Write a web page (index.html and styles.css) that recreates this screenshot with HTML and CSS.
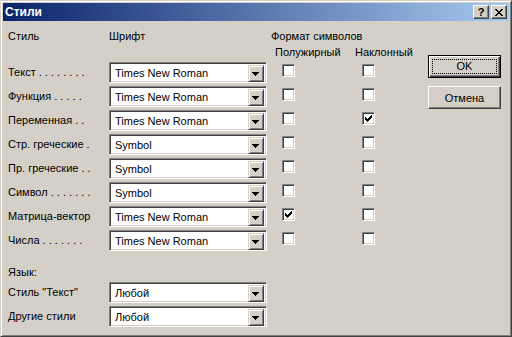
FILE: index.html
```html
<!DOCTYPE html>
<html lang="ru">
  <head>
    <meta charset="UTF-8" />
    <meta name="viewport" content="width=device-width, initial-scale=1.0" />
    <title>Стили</title>
    <link rel="stylesheet" href="styles.css">
  </head>
  <body>
    <div class="window">
      <div class="titlebar">
        <span class="title">Стили</span>
        <div class="caption-buttons">
          <button class="cap-btn help">?</button>
          <button class="cap-btn">
            <svg width="8" height="7" viewBox="0 0 8 7"><path d="M0 0h2v1h-2zM6 0h2v1h-2zM1 1h2v1h-2zM5 1h2v1h-2zM2 2h4v1h-4zM3 3h2v1h-2zM2 4h4v1h-4zM1 5h2v1h-2zM5 5h2v1h-2zM0 6h2v1h-2zM6 6h2v1h-2z" fill="#000"/></svg>
          </button>
        </div>
      </div>

      <div class="content">
        <div class="form">
          <div class="head">
            <div>Стиль</div>
            <div>Шрифт</div>
            <div class="fmt">Формат символов</div>
            <div class="sub sub1">Полужирный</div>
            <div class="sub sub2">Наклонный</div>
          </div>

          <div class="grid">
            <div class="label">Текст . . . . . . . .</div>
            <div class="combo"><span>Times New Roman</span><i class="drop"></i></div>
            <div class="cell"><span class="check"></span></div>
            <div class="cell"><span class="check"></span></div>

            <div class="label">Функция . . . . .</div>
            <div class="combo"><span>Times New Roman</span><i class="drop"></i></div>
            <div class="cell"><span class="check"></span></div>
            <div class="cell"><span class="check"></span></div>

            <div class="label">Переменная . .</div>
            <div class="combo"><span>Times New Roman</span><i class="drop"></i></div>
            <div class="cell"><span class="check"></span></div>
            <div class="cell"><span class="check checked"></span></div>

            <div class="label">Стр. греческие .</div>
            <div class="combo"><span>Symbol</span><i class="drop"></i></div>
            <div class="cell"><span class="check"></span></div>
            <div class="cell"><span class="check"></span></div>

            <div class="label">Пр. греческие . .</div>
            <div class="combo"><span>Symbol</span><i class="drop"></i></div>
            <div class="cell"><span class="check"></span></div>
            <div class="cell"><span class="check"></span></div>

            <div class="label">Символ . . . . . . .</div>
            <div class="combo"><span>Symbol</span><i class="drop"></i></div>
            <div class="cell"><span class="check"></span></div>
            <div class="cell"><span class="check"></span></div>

            <div class="label">Матрица-вектор</div>
            <div class="combo"><span>Times New Roman</span><i class="drop"></i></div>
            <div class="cell"><span class="check checked"></span></div>
            <div class="cell"><span class="check"></span></div>

            <div class="label">Числа . . . . . . .</div>
            <div class="combo"><span>Times New Roman</span><i class="drop"></i></div>
            <div class="cell"><span class="check"></span></div>
            <div class="cell"><span class="check"></span></div>
          </div>

          <div class="lang-title">Язык:</div>
          <div class="lang">
            <div class="label">Стиль "Текст"</div>
            <div class="combo"><span>Любой</span><i class="drop"></i></div>
            <div class="label">Другие стили</div>
            <div class="combo"><span>Любой</span><i class="drop"></i></div>
          </div>
        </div>

        <div class="actions">
          <button class="btn default"><span class="focus">OK</span></button>
          <button class="btn">Отмена</button>
        </div>
      </div>
    </div>
  </body>
</html>
```

FILE: styles.css
```css
body {
  margin: 0;
  background: #d4d0c8;
  font-family: "Liberation Sans", Arial, sans-serif;
  font-size: 11px;
  color: #000;
}
.window {
  width: 512px;
  height: 337px;
  box-sizing: border-box;
  border: 1px solid;
  border-color: #d4d0c8 #404040 #404040 #d4d0c8;
  box-shadow: inset 1px 1px #fff, inset -1px -1px #808080;
  padding: 2px;
  background: #d4d0c8;
}
.titlebar {
  height: 18px;
  display: flex;
  align-items: flex-start;
  background: linear-gradient(to right, #0a246a, #a6caf0);
  color: #fff;
  font-weight: bold;
}
.title {
  padding-left: 2px;
  line-height: 18px;
  font-size: 12px;
}
.caption-buttons {
  margin-left: auto;
  display: flex;
  gap: 2px;
  padding: 2px 2px 0 0;
}
.cap-btn {
  width: 16px;
  height: 14px;
  padding: 0;
  box-sizing: border-box;
  background: #d4d0c8;
  border: 1px solid;
  border-color: #fff #404040 #404040 #fff;
  box-shadow: inset -1px -1px #808080;
  display: flex;
  align-items: center;
  justify-content: center;
  font-family: "Liberation Sans", Arial, sans-serif;
  font-size: 11px;
  font-weight: bold;
  line-height: 12px;
  color: #000;
}
.content {
  display: flex;
}
.form {
  width: 424px;
  box-sizing: border-box;
  padding: 7px 0 0 5px;
}
.head {
  display: grid;
  grid-template-columns: 101px 158px 80px 80px;
  grid-auto-rows: 16px;
  line-height: 16px;
}
.fmt {
  grid-column: 3 / span 2;
  padding-left: 4px;
}
.sub {
  padding-left: 8px;
}
.sub1 {
  grid-column: 3;
}
.sub2 {
  grid-column: 4;
}
.grid {
  margin-top: 2px;
  display: grid;
  grid-template-columns: 101px 158px 80px 80px;
  grid-auto-rows: 21px;
  row-gap: 3px;
}
.label {
  line-height: 21px;
  white-space: nowrap;
}
.combo {
  display: flex;
  box-sizing: border-box;
  height: 21px;
  border: 1px solid;
  border-color: #808080 #fff #fff #808080;
  box-shadow: inset 1px 1px #404040, inset -1px -1px #d4d0c8;
  padding: 2px;
  background: #fff;
}
.combo span {
  flex: 1;
  padding-left: 3px;
  line-height: 17px;
}
.drop {
  width: 16px;
  height: 17px;
  box-sizing: border-box;
  border: 1px solid;
  border-color: #d4d0c8 #404040 #404040 #d4d0c8;
  box-shadow: inset 1px 1px #fff, inset -1px -1px #808080;
  background-color: #d4d0c8;
  background-image: url("data:image/svg+xml,%3Csvg xmlns='http://www.w3.org/2000/svg' width='7' height='4'%3E%3Cpath d='M0 0h7v1h-7zM1 1h5v1h-5zM2 2h3v1h-3zM3 3h1v1h-1z'/%3E%3C/svg%3E");
  background-repeat: no-repeat;
  background-position: 3px 6px;
}
.cell {
  padding: 2px 0 0 15px;
}
.check {
  display: block;
  width: 13px;
  height: 13px;
  box-sizing: border-box;
  border: 1px solid;
  border-color: #808080 #fff #fff #808080;
  box-shadow: inset 1px 1px #404040, inset -1px -1px #d4d0c8;
  background: #fff;
}
.check.checked {
  background-image: url("data:image/svg+xml,%3Csvg xmlns='http://www.w3.org/2000/svg' width='7' height='7'%3E%3Cpath d='M0 2h1v3h-1zM1 3h1v3h-1zM2 4h1v3h-1zM3 3h1v3h-1zM4 2h1v3h-1zM5 1h1v3h-1zM6 0h1v3h-1z'/%3E%3C/svg%3E");
  background-repeat: no-repeat;
  background-position: 2px 2px;
}
.lang-title {
  margin-top: 13px;
  line-height: 16px;
}
.lang {
  margin-top: 2px;
  display: grid;
  grid-template-columns: 101px 158px;
  grid-auto-rows: 21px;
  row-gap: 3px;
}
.actions {
  margin-left: 1px;
  padding-top: 34px;
  display: flex;
  flex-direction: column;
  gap: 8px;
}
.btn {
  width: 73px;
  height: 23px;
  padding: 0;
  box-sizing: border-box;
  background: #d4d0c8;
  border: 1px solid;
  border-color: #fff #404040 #404040 #fff;
  box-shadow: inset -1px -1px #808080;
  font-family: "Liberation Sans", Arial, sans-serif;
  font-size: 11px;
  color: #000;
}
.btn.default {
  border: 1px solid #000;
  box-shadow: inset 1px 1px #fff, inset -1px -1px #404040, inset -2px -2px #808080;
  display: flex;
  padding: 3px;
}
.focus {
  flex: 1;
  border: 1px dotted #000;
  line-height: 13px;
}
```
